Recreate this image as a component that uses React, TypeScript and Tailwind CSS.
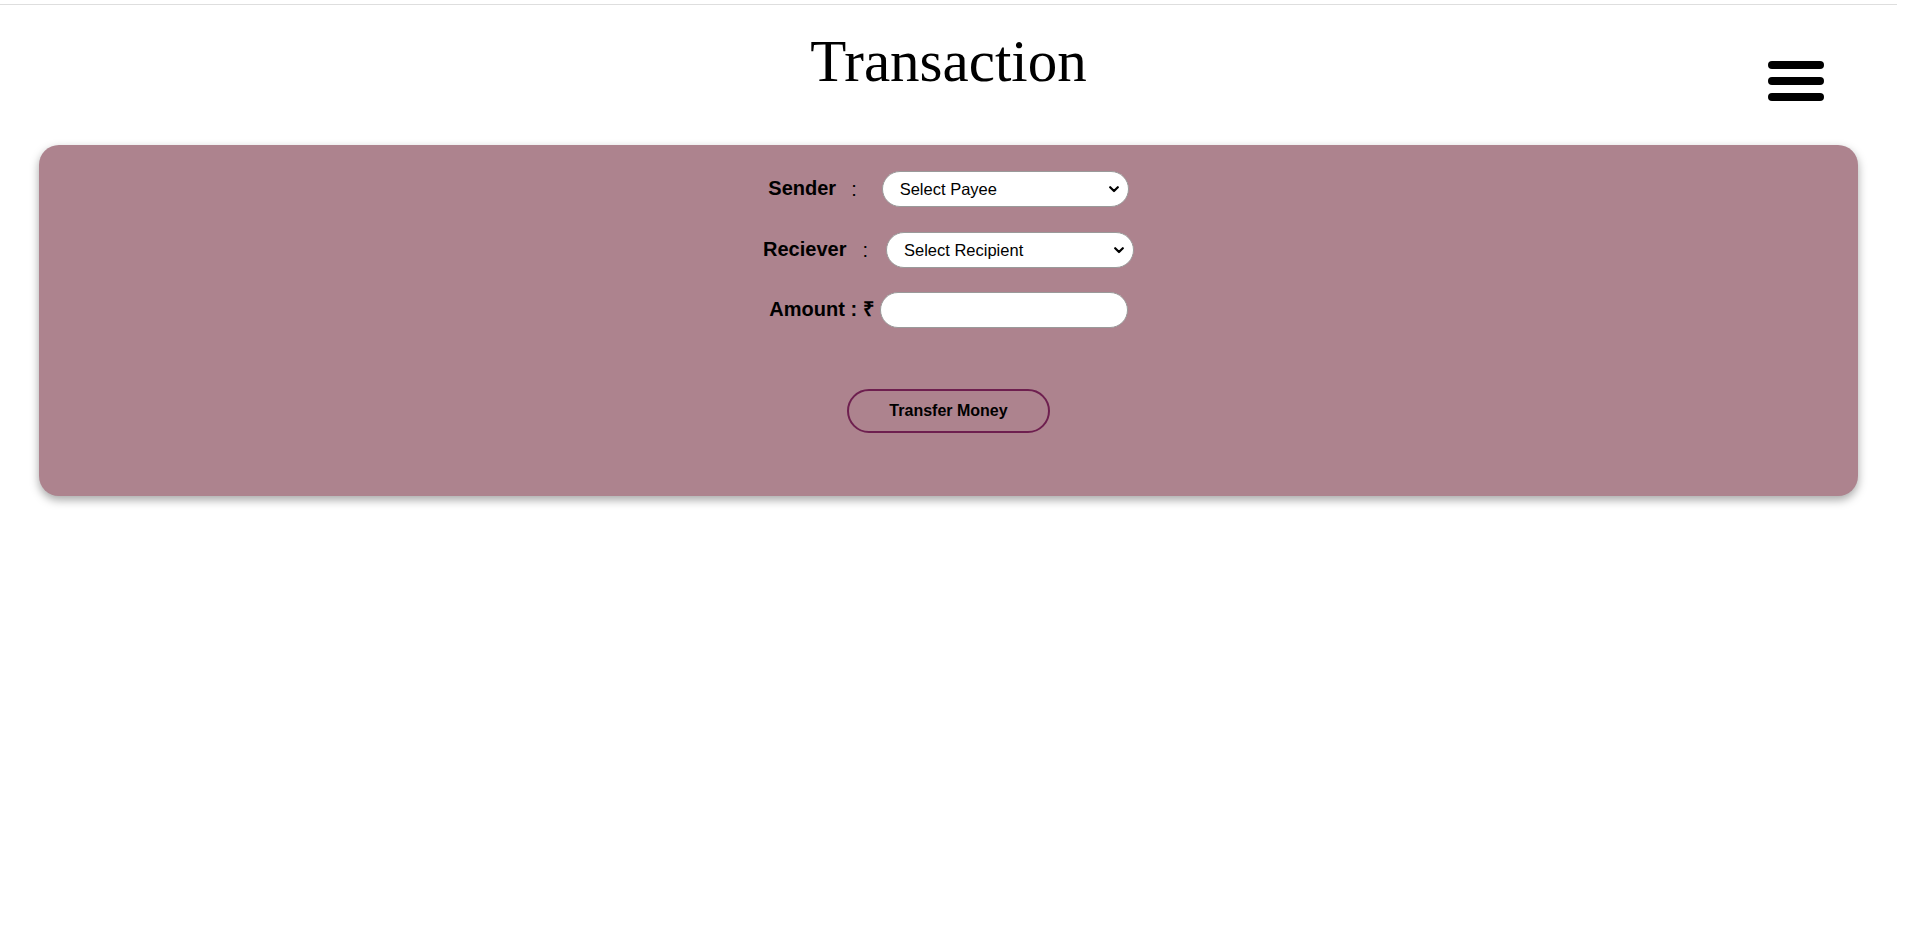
const Menu = () => (
  <svg width="56" height="40" viewBox="0 0 56 40" fill="none">
    <line x1="4" y1="4" x2="52" y2="4" stroke="black" strokeWidth="8" strokeLinecap="round" />
    <line x1="4" y1="20" x2="52" y2="20" stroke="black" strokeWidth="8" strokeLinecap="round" />
    <line x1="4" y1="36" x2="52" y2="36" stroke="black" strokeWidth="8" strokeLinecap="round" />
  </svg>
);

const Select = ({ label, width }: { label: string; width: string }) => (
  <div className={`relative ${width}`}>
    <select className="w-full h-[36px] appearance-none rounded-full bg-white border border-[#9a9a9a] pl-[17px] pr-[28px] text-[16.5px] outline-none">
      <option>{label}</option>
    </select>
    <svg
      className="pointer-events-none absolute right-[10px] top-[15px]"
      width="10"
      height="7"
      viewBox="0 0 10 7"
      fill="none"
    >
      <path d="M1.2 1.2 L5 5 L8.8 1.2" stroke="black" strokeWidth="2.2" strokeLinecap="round" strokeLinejoin="round" />
    </svg>
  </div>
);

const App = () => {
  return (
    <div className="min-h-screen bg-white text-black font-['Liberation_Sans',Arial,sans-serif]">
      <div className="mr-[11px]">
        <div className="mt-[4px] border-t border-[#dedede]" />
        <header className="grid grid-cols-[1fr_auto_1fr] items-start h-[140px]">
          <div />
          <h1 className="pt-[27px] text-[59px] leading-none font-normal font-['Liberation_Serif','Times_New_Roman',serif]">
            Transaction
          </h1>
          <div className="flex justify-end pt-[56px] pr-[73px]">
            <Menu />
          </div>
        </header>

        <main className="mx-[39px] rounded-[20px] bg-[#ad838e] shadow-[0_4px_10px_rgba(0,0,0,0.35)] pt-[26px] pb-[63px] flex flex-col items-center">
          <div className="flex items-center h-[36px]">
            <span className="text-[20px] font-bold -mt-[3px]">Sender</span>
            <span className="text-[20px] ml-[15px] mr-[25px]">:</span>
            <Select label="Select Payee" width="w-[247px]" />
          </div>
          <div className="flex items-center h-[36px] mt-[25px]">
            <span className="text-[20px] font-bold -mt-[3px]">Reciever</span>
            <span className="text-[20px] ml-[16px] mr-[18px]">:</span>
            <Select label="Select Recipient" width="w-[248px]" />
          </div>
          <div className="flex items-center h-[36px] mt-[24px]">
            <span className="text-[20px] font-bold -mt-[2px]">Amount : ₹</span>
            <input
              type="text"
              className="ml-[6px] w-[248px] h-[36px] rounded-full bg-white border border-[#9a9a9a] px-[13px] text-[16px] outline-none"
            />
          </div>
          <button className="mt-[61px] w-[203px] h-[44px] rounded-full border-2 border-[#6e1f4f] text-[16px] font-bold">
            Transfer Money
          </button>
        </main>
      </div>
    </div>
  );
};

export default App;
